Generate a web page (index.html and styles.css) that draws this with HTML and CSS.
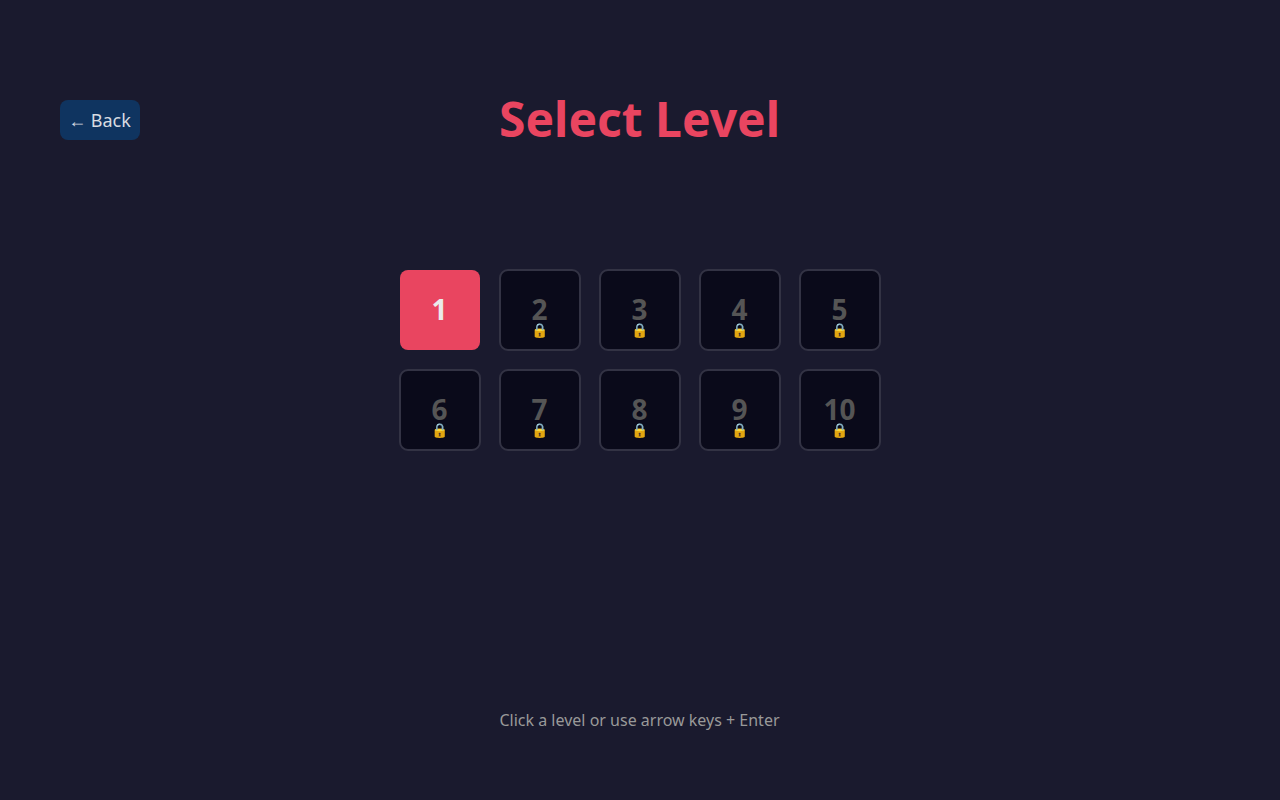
FILE: index.html
```html
<!DOCTYPE html>
<html lang="en">
<head>
<meta charset="utf-8">
<title>Select Level</title>
<link rel="stylesheet" href="styles.css">
</head>
<body>
<main class="screen">
  <header class="header">
    <button class="back" type="button">← Back</button>
    <h1 class="title">Select Level</h1>
  </header>
  <div class="levels">
    <button class="level current" type="button"><span>1</span></button>
    <button class="level" type="button"><span>2</span><span class="lock">🔒</span></button>
    <button class="level" type="button"><span>3</span><span class="lock">🔒</span></button>
    <button class="level" type="button"><span>4</span><span class="lock">🔒</span></button>
    <button class="level" type="button"><span>5</span><span class="lock">🔒</span></button>
    <button class="level" type="button"><span>6</span><span class="lock">🔒</span></button>
    <button class="level" type="button"><span>7</span><span class="lock">🔒</span></button>
    <button class="level" type="button"><span>8</span><span class="lock">🔒</span></button>
    <button class="level" type="button"><span>9</span><span class="lock">🔒</span></button>
    <button class="level" type="button"><span>10</span><span class="lock">🔒</span></button>
  </div>
  <p class="hint">Click a level or use arrow keys + Enter</p>
</main>
</body>
</html>
```
FILE: styles.css
```css
* {
  box-sizing: border-box;
}

body {
  margin: 0;
  background: #1a1a2e;
  color: #eaeaea;
  font-family: "Noto Sans", sans-serif;
}

.screen {
  display: flex;
  flex-direction: column;
  align-items: center;
  min-height: 100vh;
  padding: 87px 60px 68px;
}

.header {
  display: grid;
  grid-template-columns: 1fr auto 1fr;
  align-items: center;
  width: 100%;
}

.back {
  width: 80px;
  height: 40px;
  padding: 0 1px 0 0;
  border: 0;
  border-radius: 8px;
  background: #0f3460;
  color: #d8dce2;
  font: 18px "Noto Sans", sans-serif;
}

.title {
  margin: 0;
  padding: 0 1px 2px 0;
  color: #e94560;
  font-size: 48px;
  line-height: 64px;
}

.levels {
  display: grid;
  grid-template-columns: repeat(5, 82px);
  gap: 18px;
  margin-top: 116px;
}

.level {
  display: flex;
  flex-direction: column;
  align-items: center;
  height: 82px;
  padding: 24px 1px 0 0;
  border: 2px solid #333344;
  border-radius: 9px;
  background: #0a0a1a;
  color: #555555;
  font: bold 28px/28px "Noto Sans", sans-serif;
}

.current {
  height: 80px;
  margin: 1px;
  padding-top: 25px;
  border: 0;
  border-radius: 8px;
  background: #e94560;
  color: #eaeaea;
}

.lock {
  font-size: 14px;
  font-weight: normal;
  line-height: 14px;
}

.hint {
  margin: auto 0 0;
  padding-right: 1px;
  color: #999999;
  font-size: 16px;
  line-height: 24px;
}
```
